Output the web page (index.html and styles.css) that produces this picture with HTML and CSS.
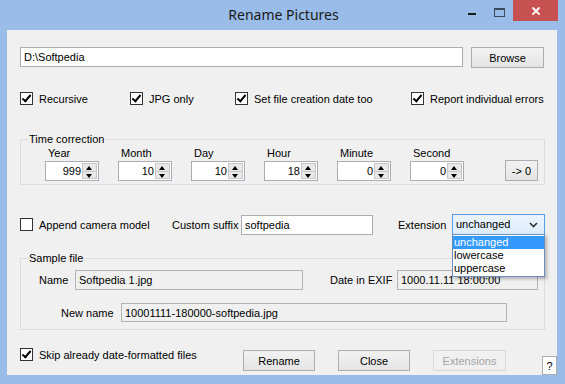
FILE: index.html
```html
<!DOCTYPE html>
<html lang="en">
<head>
    <meta charset="UTF-8">
    <title>Rename Pictures</title>
    <link rel="stylesheet" href="styles.css">
</head>
<body>
    <div class="window">
        <div class="titlebar">
            <div class="title">Rename Pictures</div>
            <div class="caption-btns">
                <span class="cap-min"></span>
                <span class="cap-max"></span>
                <span class="cap-close">
                    <svg width="10" height="10" viewBox="0 0 10 10"><path d="M1.5 1.5 L8.5 8.5 M8.5 1.5 L1.5 8.5" stroke="#fff" stroke-width="1.8"/></svg>
                </span>
            </div>
        </div>

        <div class="client">
            <div class="row path-row">
                <input class="textbox path-box" type="text" value="D:\Softpedia">
                <button class="btn browse">Browse</button>
            </div>

            <div class="row checks-row">
                <label class="check w110"><span class="box checked"></span>Recursive</label>
                <label class="check w105"><span class="box checked"></span>JPG only</label>
                <label class="check w176"><span class="box checked"></span>Set file creation date too</label>
                <label class="check"><span class="box checked"></span>Report individual errors</label>
            </div>

            <fieldset class="group time-group">
                <legend>Time correction</legend>
                <div class="time-row">
                    <div class="spin-col"><span class="spin-label">Year</span><div class="spinner"><span class="spin-val">999</span><span class="arrows"><i class="up"></i><i class="down"></i></span></div></div>
                    <div class="spin-col"><span class="spin-label">Month</span><div class="spinner"><span class="spin-val">10</span><span class="arrows"><i class="up"></i><i class="down"></i></span></div></div>
                    <div class="spin-col"><span class="spin-label">Day</span><div class="spinner"><span class="spin-val">10</span><span class="arrows"><i class="up"></i><i class="down"></i></span></div></div>
                    <div class="spin-col"><span class="spin-label">Hour</span><div class="spinner"><span class="spin-val">18</span><span class="arrows"><i class="up"></i><i class="down"></i></span></div></div>
                    <div class="spin-col"><span class="spin-label">Minute</span><div class="spinner"><span class="spin-val">0</span><span class="arrows"><i class="up"></i><i class="down"></i></span></div></div>
                    <div class="spin-col"><span class="spin-label">Second</span><div class="spinner"><span class="spin-val">0</span><span class="arrows"><i class="up"></i><i class="down"></i></span></div></div>
                    <button class="btn zero">-&gt; 0</button>
                </div>
            </fieldset>

            <div class="row options-row">
                <label class="check w152"><span class="box"></span>Append camera model</label>
                <span class="lbl w69">Custom suffix</span>
                <input class="textbox suffix-box" type="text" value="softpedia">
                <span class="lbl w54">Extension</span>
                <div class="combo-wrap">
                    <div class="combo">unchanged
                        <svg class="chev" width="9" height="6" viewBox="0 0 9 6"><path d="M1 1 L4.5 4.5 L8 1" stroke="#333" stroke-width="1.6" fill="none"/></svg>
                    </div>
                    <ul class="dropdown">
                        <li class="selected">unchanged</li>
                        <li>lowercase</li>
                        <li>uppercase</li>
                    </ul>
                </div>
            </div>

            <fieldset class="group sample-group">
                <legend>Sample file</legend>
                <div class="sample-row">
                    <span class="lbl w36">Name</span>
                    <div class="textbox readonly name-box">Softpedia 1.jpg</div>
                    <span class="lbl date-lbl">Date in EXIF</span>
                    <div class="textbox readonly date-box">1000.11.11 18:00:00</div>
                </div>
                <div class="sample-row newname-row">
                    <span class="lbl w60">New name</span>
                    <div class="textbox readonly newname-box">10001111-180000-softpedia.jpg</div>
                </div>
            </fieldset>

            <div class="row bottom-row">
                <label class="check w223"><span class="box checked"></span>Skip already date-formatted files</label>
                <button class="btn action">Rename</button>
                <button class="btn action">Close</button>
                <button class="btn action disabled">Extensions</button>
                <button class="btn help">?</button>
            </div>
        </div>
    </div>
</body>
</html>
```

FILE: styles.css
```css
body {
    margin: 0;
    padding: 0;
    font-family: 'Liberation Sans', Arial, sans-serif;
    font-size: 11px;
    color: #000;
    background: #99bce8;
}

.window {
    width: 565px;
    height: 384px;
    background: #99bce8;
    position: relative;
    overflow: hidden;
}

/* Title bar */
.titlebar {
    height: 30px;
    display: flex;
    align-items: flex-start;
    position: relative;
}

.title {
    flex: 1;
    text-align: center;
    font-family: 'Noto Sans', 'Open Sans', sans-serif;
    font-size: 14px;
    line-height: 30px;
    color: #1a1a1a;
    padding-left: 2px;
}

.caption-btns {
    position: absolute;
    top: 0;
    right: 7px;
    display: flex;
    align-items: flex-start;
}

.cap-min {
    width: 8px;
    height: 2px;
    background: #1a1a1a;
    margin: 13px 18px 0 0;
}

.cap-max {
    width: 9px;
    height: 6px;
    border: 1px solid #3a4a5a;
    border-top-width: 2px;
    margin: 8px 8px 0 0;
}

.cap-close {
    width: 45px;
    height: 21px;
    background: #c75050;
    display: flex;
    align-items: center;
    justify-content: center;
}

/* Client area */
.client {
    margin: 0 8px 0 7px;
    height: 345px;
    background: #f0f0f0;
    padding: 17px 12px 0 13px;
    box-sizing: border-box;
}

.row {
    display: flex;
    align-items: center;
}

.textbox {
    box-sizing: border-box;
    height: 20px;
    border: 1px solid #abadb3;
    background: #fff;
    font-family: inherit;
    font-size: 11px;
    padding: 0 3px;
    margin: 0;
    outline: none;
    line-height: 18px;
    color: #000;
}

.textbox.readonly {
    background: #f0f0f0;
    border-color: #b4b4b4;
    white-space: nowrap;
    overflow: hidden;
}

.btn {
    box-sizing: border-box;
    height: 21px;
    border: 1px solid #adadad;
    background: linear-gradient(#f2f2f2, #e4e4e4);
    font-family: inherit;
    font-size: 11px;
    color: #000;
    padding: 0;
    margin: 0;
}

.btn.disabled {
    color: #a3a3a3;
    border-color: #d9d9d9;
    background: #f0f0f0;
}

.path-row {
    gap: 8px;
    align-items: flex-start;
}

.path-box {
    width: 443px;
}

.browse {
    width: 73px;
}

/* Checkboxes */
.check {
    display: flex;
    align-items: center;
    white-space: nowrap;
    font-size: 11px;
}

.box {
    width: 13px;
    height: 13px;
    box-sizing: border-box;
    border: 1px solid #333;
    background: #fff;
    margin-right: 6px;
    position: relative;
    flex-shrink: 0;
}

.box.checked::after {
    content: '';
    position: absolute;
    left: 3px;
    top: 0px;
    width: 3px;
    height: 7px;
    border: solid #000;
    border-width: 0 2px 2px 0;
    transform: rotate(40deg);
}

.w110 { width: 110px; }
.w105 { width: 105px; }
.w176 { width: 176px; }
.w152 { width: 152px; }
.w223 { width: 223px; }
.w69 { width: 69px; }
.w54 { width: 54px; }
.w36 { width: 36px; }
.w60 { width: 60px; }

.lbl {
    font-size: 11px;
    white-space: nowrap;
    flex-shrink: 0;
}

.checks-row {
    margin-top: 24px;
    height: 13px;
}

/* Group boxes */
.group {
    margin: 0;
    border: 1px solid #dcdcdc;
    box-sizing: border-box;
    width: 525px;
    min-width: 0;
}

.group legend {
    padding: 0 1px;
    font-size: 11px;
    line-height: 13px;
}

.time-group {
    margin-top: 28px;
    padding: 1px 6px 3px 7px;
}

.time-row {
    display: flex;
    align-items: flex-end;
    padding-left: 17px;
    gap: 19px;
}

.spin-col {
    display: flex;
    flex-direction: column;
    width: 54px;
}

.spin-label {
    font-size: 11px;
    line-height: 13px;
    margin: 0 0 1px 3px;
}

.spinner {
    box-sizing: border-box;
    height: 20px;
    border: 1px solid #abadb3;
    background: #fff;
    display: flex;
    font-size: 11px;
}

.spin-val {
    flex: 1;
    text-align: right;
    line-height: 18px;
    padding-right: 1px;
}

.arrows {
    width: 15px;
    display: flex;
    flex-direction: column;
    margin: 1px 1px 1px 0;
    border: 1px solid #c8c8c8;
    box-sizing: border-box;
    background: #e8e8e8;
}

.arrows i {
    flex: 1;
    position: relative;
}

.arrows i.up {
    border-bottom: 1px solid #c8c8c8;
}

.arrows i::after {
    content: '';
    position: absolute;
    left: 3px;
    border-left: 3.5px solid transparent;
    border-right: 3.5px solid transparent;
}

.arrows i.up::after {
    top: 2px;
    border-bottom: 4px solid #000;
}

.arrows i.down::after {
    top: 2px;
    border-top: 4px solid #000;
}

.zero {
    width: 33px;
    margin-left: auto;
}

/* Options row */
.options-row {
    margin-top: 29px;
}

.suffix-box {
    width: 132px;
    margin-right: 25px;
    height: 20px;
}

.combo-wrap {
    position: relative;
    width: 93px;
}

.combo {
    box-sizing: border-box;
    height: 21px;
    border: 1px solid #569de5;
    background: linear-gradient(#ecf4fc, #dcecfc);
    font-size: 11px;
    line-height: 19px;
    padding-left: 3px;
    position: relative;
}

.chev {
    position: absolute;
    right: 6px;
    top: 7px;
}

.dropdown {
    position: absolute;
    left: 0;
    top: 20px;
    width: 93px;
    box-sizing: border-box;
    margin: 0;
    padding: 1px 0;
    list-style: none;
    background: #fff;
    border: 1px solid #6e8fba;
    box-shadow: 2px 2px 3px rgba(0, 0, 0, 0.25);
    z-index: 2;
}

.dropdown li {
    height: 13px;
    line-height: 13px;
    font-size: 11px;
    padding-left: 1px;
}

.dropdown li.selected {
    background: #3399ff;
    color: #fff;
}

/* Sample file */
.sample-group {
    margin-top: 17px;
    padding: 5px 6px 7px 7px;
}

.sample-row {
    display: flex;
    align-items: center;
    padding-left: 11px;
}

.name-box {
    width: 228px;
}

.date-lbl {
    margin-left: 27px;
    width: 67px;
}

.date-box {
    width: 141px;
}

.newname-row {
    margin-top: 13px;
    padding-left: 33px;
}

.newname-box {
    width: 386px;
    height: 19px;
}

/* Bottom row */
.bottom-row {
    align-items: flex-start;
    height: 45px;
    margin-right: -12px;
}

.bottom-row .check {
    margin-top: 18px;
}

.action {
    width: 72px;
    margin-top: 20px;
    margin-right: 23px;
}

.action.disabled {
    width: 73px;
    margin-right: 0;
}

.help {
    width: 15px;
    height: 19px;
    margin-top: 26px;
    margin-left: auto;
    background: #fff;
    border-color: #adadad;
    font-size: 11px;
}
```
